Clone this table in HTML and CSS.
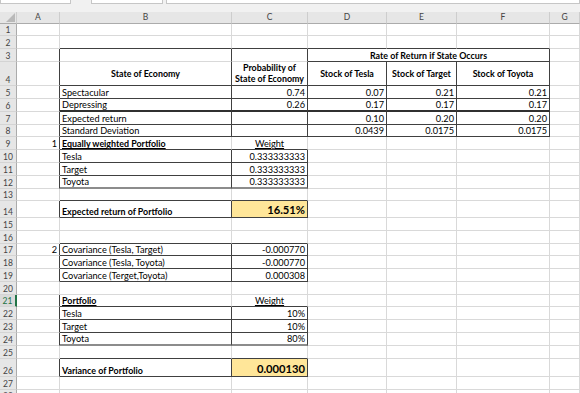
FILE: index.html
```html
<!DOCTYPE html>
<html lang="en">
<head>
    <meta charset="UTF-8">
    <meta name="viewport" content="width=device-width, initial-scale=1.0">
    <title>Portfolio - Rate of Return</title>
    <link rel="stylesheet" href="styles.css">
</head>
<body>
    <!-- Name box / formula bar strip -->
    <div class="toolbar">
        <div class="box name-box"></div>
        <div class="box fx-box"></div>
        <div class="box formula-box"></div>
    </div>

    <table class="sheet">
        <colgroup>
            <col class="c-no"><col class="c-a"><col class="c-b"><col class="c-c">
            <col class="c-d"><col class="c-e"><col class="c-f"><col class="c-g">
        </colgroup>
        <thead>
            <tr>
                <th class="corner"><svg width="9" height="9" viewBox="0 0 9 9"><polygon points="9,0 9,9 0,9" fill="#b9b9b9"/></svg></th>
                <th>A</th><th>B</th><th>C</th><th>D</th><th>E</th><th>F</th><th>G</th>
            </tr>
        </thead>
        <tbody>
            <tr><th>1</th><td></td><td></td><td></td><td></td><td></td><td></td><td></td></tr>
            <tr><th>2</th><td></td><td class="bb"></td><td class="bb"></td><td class="bb"></td><td class="bb"></td><td class="bb"></td><td></td></tr>
            <tr><th>3</th><td class="br"></td><td class="br"></td><td class="br"></td><td colspan="3" class="head br bb">Rate of Return if State Occurs</td><td></td></tr>
            <tr class="r4">
                <th>4</th><td class="br"></td>
                <td class="head br bb">State of Economy</td>
                <td class="head br bb">Probability of<br>State of Economy</td>
                <td class="head br bb">Stock of Tesla</td>
                <td class="head br bb">Stock of Target</td>
                <td class="head br bb">Stock of Toyota</td>
                <td></td>
            </tr>
            <tr><th>5</th><td class="br"></td><td class="br bb">Spectacular</td><td class="num br bb">0.74</td><td class="num br bb">0.07</td><td class="num br bb">0.21</td><td class="num br bb">0.21</td><td></td></tr>
            <tr><th>6</th><td class="br"></td><td class="br bb-thick">Depressing</td><td class="num br bb-thick">0.26</td><td class="num br bb-thick">0.17</td><td class="num br bb-thick">0.17</td><td class="num br bb-thick">0.17</td><td></td></tr>
            <tr><th>7</th><td class="br"></td><td class="br bb">Expected return</td><td class="num br bb"></td><td class="num br bb">0.10</td><td class="num br bb">0.20</td><td class="num br bb">0.20</td><td></td></tr>
            <tr><th>8</th><td class="br"></td><td class="br bb">Standard Deviation</td><td class="num br bb"></td><td class="num br bb">0.0439</td><td class="num br bb">0.0175</td><td class="num br bb">0.0175</td><td></td></tr>
            <tr><th>9</th><td class="num br">1</td><td class="bold under bb">Equally weighted Portfolio</td><td class="center under bb">Weight</td><td></td><td></td><td></td><td></td></tr>
            <tr><th>10</th><td class="br"></td><td class="br bb">Tesla</td><td class="num br bb">0.333333333</td><td></td><td></td><td></td><td></td></tr>
            <tr><th>11</th><td class="br"></td><td class="br bb">Target</td><td class="num br bb">0.333333333</td><td></td><td></td><td></td><td></td></tr>
            <tr><th>12</th><td class="br"></td><td class="br bb-grey">Toyota</td><td class="num br bb-grey">0.333333333</td><td></td><td></td><td></td><td></td></tr>
            <tr><th>13</th><td></td><td class="bb"></td><td class="bb"></td><td></td><td></td><td></td><td></td></tr>
            <tr class="r14"><th>14</th><td class="br"></td><td class="bold br bb">Expected return of Portfolio</td><td class="result br bb">16.51%</td><td></td><td></td><td></td><td></td></tr>
            <tr><th>15</th><td></td><td></td><td></td><td></td><td></td><td></td><td></td></tr>
            <tr><th>16</th><td></td><td class="bb"></td><td class="bb"></td><td></td><td></td><td></td><td></td></tr>
            <tr><th>17</th><td class="num br">2</td><td class="br bb">Covariance (Tesla, Target)</td><td class="num br bb">-0.000770</td><td></td><td></td><td></td><td></td></tr>
            <tr><th>18</th><td class="br"></td><td class="br bb">Covariance (Tesla, Toyota)</td><td class="num br bb">-0.000770</td><td></td><td></td><td></td><td></td></tr>
            <tr><th>19</th><td class="br"></td><td class="br bb">Covariance (Terget,Toyota)</td><td class="num br bb">0.000308</td><td></td><td></td><td></td><td></td></tr>
            <tr><th>20</th><td></td><td></td><td></td><td></td><td></td><td></td><td></td></tr>
            <tr><th class="active">21</th><td class="br"></td><td class="bold under bb">Portfolio</td><td class="center under bb">Weight</td><td></td><td></td><td></td><td></td></tr>
            <tr><th>22</th><td class="br"></td><td class="br bb">Tesla</td><td class="num br bb">10%</td><td></td><td></td><td></td><td></td></tr>
            <tr><th>23</th><td class="br"></td><td class="br bb">Target</td><td class="num br bb">10%</td><td></td><td></td><td></td><td></td></tr>
            <tr><th>24</th><td class="br"></td><td class="br bb-grey">Toyota</td><td class="num br bb-grey">80%</td><td></td><td></td><td></td><td></td></tr>
            <tr><th>25</th><td></td><td class="bb"></td><td class="bb"></td><td></td><td></td><td></td><td></td></tr>
            <tr class="r26"><th>26</th><td class="br"></td><td class="bold br bb">Variance of Portfolio</td><td class="result br bb">0.000130</td><td></td><td></td><td></td><td></td></tr>
            <tr><th>27</th><td></td><td></td><td></td><td></td><td></td><td></td><td></td></tr>
            <tr><th>28</th><td></td><td></td><td></td><td></td><td></td><td></td><td></td></tr>
        </tbody>
    </table>
</body>
</html>
```

FILE: styles.css
```css
/* Resetting styles */
* {
    margin: 0;
    padding: 0;
    box-sizing: border-box;
}

body {
    width: 580px;
    height: 393px;
    overflow: hidden;
    background: #fff;
    font-family: "Lato", "Liberation Sans", sans-serif;
    color: #000;
}

/* Formula bar strip */
.toolbar {
    display: flex;
    height: 12px;
    background: #f1f1f1;
}

.toolbar .box {
    height: 4px;
    background: #fff;
    border: 1px solid #c6c6c6;
    border-top: none;
}

.name-box {
    width: 71px;
}

.fx-box {
    width: 72px;
    margin-left: 20px;
}

.formula-box {
    flex: 1;
    margin-left: 3px;
    border-right: none;
}

/* Grid */
.sheet {
    border-collapse: separate;
    border-spacing: 0;
    table-layout: fixed;
    width: 580px;
    font-size: 9.2px;
}

.c-no { width: 17px; }
.c-a { width: 43px; }
.c-b { width: 172px; }
.c-c { width: 76px; }
.c-d { width: 79px; }
.c-e { width: 70px; }
.c-f { width: 93px; }
.c-g { width: 30px; }

.sheet tr {
    height: 12.75px;
}

.sheet thead tr {
    height: 11.5px;
}

.sheet thead th {
    background: #e6e6e6;
    color: #444;
    font-weight: normal;
    font-size: 8.5px;
    line-height: 10px;
    border-right: 1px solid #cdcdcd;
    border-bottom: 1px solid #ababab;
}

.sheet th.corner {
    text-align: right;
    vertical-align: bottom;
    line-height: 0;
    padding: 0 1px 1px 0;
}

.sheet tbody th {
    background: #e6e6e6;
    color: #444;
    font-weight: normal;
    font-size: 8.5px;
    line-height: 10px;
    text-align: center;
    vertical-align: bottom;
    border-right: 1px solid #ababab;
    border-bottom: 1px solid #d4d4d4;
}

.sheet tbody th.active {
    color: #217346;
    background: #dadada;
    border-right: 2px solid #217346;
}

.sheet td {
    border-right: 1px solid #d9d9d9;
    border-bottom: 1px solid #d9d9d9;
    line-height: 11px;
    padding: 0 2px;
    white-space: nowrap;
    overflow: hidden;
    vertical-align: bottom;
}

.sheet td.br { border-right-color: #404040; }
.sheet td.bb { border-bottom-color: #404040; }

.sheet td.bb-thick {
    border-bottom: 2px solid #303030;
}

.sheet td.bb-grey {
    border-bottom: 2px solid #8c8c8c;
}

.sheet tr.r4 { height: 24.25px; }
.sheet tr.r14 { height: 16.75px; }
.sheet tr.r26 { height: 18.25px; }

.sheet tr.r4 td {
    vertical-align: middle;
    line-height: 11.6px;
}

.head,
.bold {
    font-weight: bold;
    font-size: 8.9px;
}

.head { text-align: center; }
.under { text-decoration: underline; }
.center { text-align: center; }
.num { text-align: right; }

.sheet td.result {
    background: #ffe699;
    font-weight: bold;
    font-size: 11.2px;
    line-height: 14px;
    text-align: right;
}
```
